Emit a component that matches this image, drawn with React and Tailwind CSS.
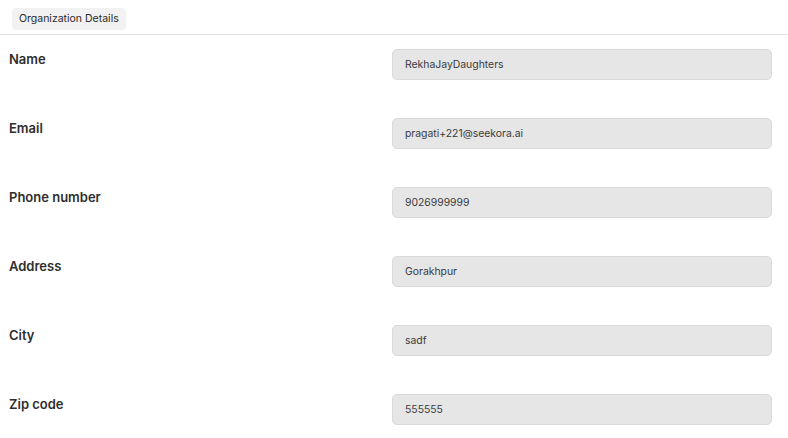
import React from "react";

const campos = [
  { label: "Name", value: "RekhaJayDaughters" },
  { label: "Email", value: "pragati+221@seekora.ai" },
  { label: "Phone number", value: "9026999999" },
  { label: "Address", value: "Gorakhpur" },
  { label: "City", value: "sadf" },
  { label: "Zip code", value: "555555" },
];

function App() {
  return (
    <div
      className="w-full min-h-screen bg-white text-[#1f1f1f]"
      style={{ fontFamily: "Inter, 'Noto Sans', sans-serif" }}
    >
      <div className="h-[35px] border-b border-[#e0e0e0] px-3 pt-1">
        <button className="h-[22px] px-[7px] rounded text-[10.5px] text-[#2a2a2a] bg-[#f2f2f2]">
          Organization Details
        </button>
      </div>

      {campos.map((campo, i) => (
        <div key={i} className="flex items-start h-[69px] pt-[14px] pl-[9px]">
          <div className="w-[383px] pt-[1px] text-[13px] leading-[18px] font-semibold text-[#2e2e2e]">
            {campo.label}
          </div>
          <input
            readOnly
            value={campo.value}
            className="w-[380px] h-[31px] px-3 rounded-[5px] border border-[#dadada] bg-[#e6e6e6] text-[10.4px] text-[#3a3a3a] outline-none"
          />
        </div>
      ))}
    </div>
  );
}

export default App;
